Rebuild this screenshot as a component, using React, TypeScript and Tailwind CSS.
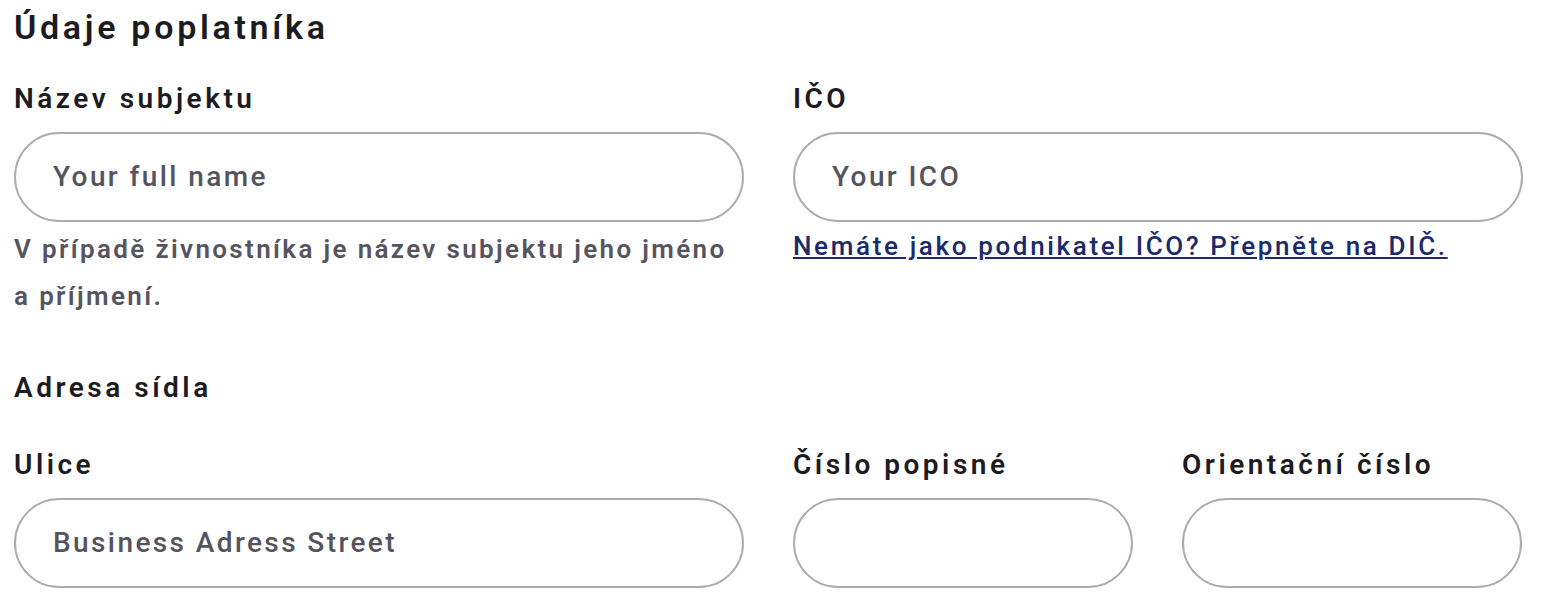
import React from "react";

const font = { fontFamily: 'Roboto, "Liberation Sans", Arial, sans-serif' };

function Field({ label, placeholder }: { label: string; placeholder?: string }) {
  return (
    <div className="flex flex-col">
      <label className="text-[28px] leading-[34px] font-semibold tracking-[3.5px] text-[#1c1b22]">{label}</label>
      <div className="mt-[16px] flex h-[90px] items-center rounded-full border-2 border-[#adacb1] px-[37px]">
        <span className="text-[28px] font-medium tracking-[2.4px] text-[#55545e]">{placeholder}</span>
      </div>
    </div>
  );
}

export default function App() {
  return (
    <div className="w-[1544px] bg-white px-[14px] pt-[7px]" style={font}>
      <h2 className="text-[34px] leading-[40px] font-semibold tracking-[3.7px] text-[#1c1b22]">Údaje poplatníka</h2>
      <div className="mt-[35px] grid w-[1509px] grid-cols-[730px_730px] gap-x-[49px]">
        <div>
          <Field label="Název subjektu" placeholder="Your full name" />
          <p className="mt-[4px] text-[26px] leading-[47px] font-semibold tracking-[2.35px] text-[#56555f]">
            V případě živnostníka je název subjektu jeho jméno a příjmení.
          </p>
        </div>
        <div>
          <Field label="IČO" placeholder="Your ICO" />
          <a href="#" className="mt-[9px] block text-[26px] leading-[30px] font-medium tracking-[2.65px] text-[#1b2a6b] underline">
            Nemáte jako podnikatel IČO? Přepněte na DIČ.
          </a>
        </div>
      </div>
      <h3 className="mt-[51px] text-[28px] leading-[34px] font-semibold tracking-[3.5px] text-[#1c1b22]">Adresa sídla</h3>
      <div className="mt-[43px] grid w-[1509px] grid-cols-[730px_340px_340px] gap-x-[49px]">
        <Field label="Ulice" placeholder="Business Adress Street" />
        <Field label="Číslo popisné" />
        <Field label="Orientační číslo" />
      </div>
    </div>
  );
}
